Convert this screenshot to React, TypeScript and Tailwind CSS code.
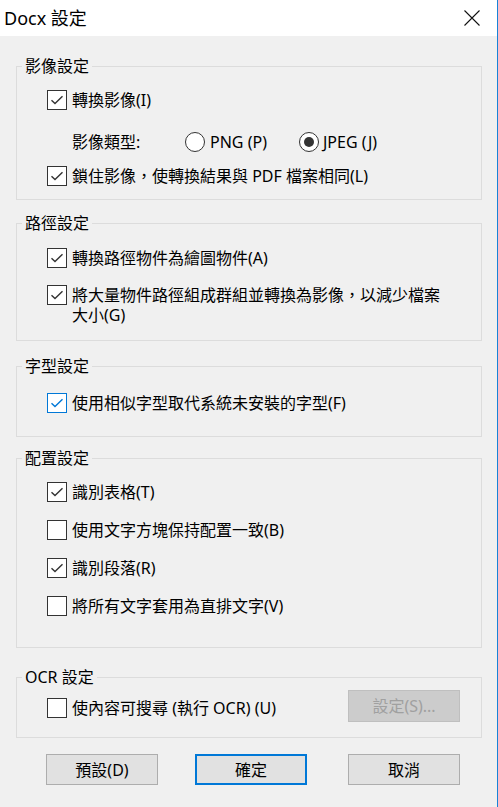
import type { ReactNode } from "react";

const font = "font-['Segoe_UI','Noto_Sans','Noto_Sans_CJK_TC',sans-serif]";

function CheckBox({ checked, focused }: { checked?: boolean; focused?: boolean }) {
  const color = focused ? "#0078d7" : "#333333";
  return (
    <span
      className={`flex h-[20px] w-[20px] shrink-0 items-center justify-center border bg-white ${
        focused ? "border-[#0078d7]" : "border-[#333333]"
      }`}
    >
      {checked && (
        <svg width="14" height="14" viewBox="0 0 14 14" fill="none">
          <path d="M1.5 7.2 L5 10.6 L12.5 3.2" stroke={color} strokeWidth="1.4" />
        </svg>
      )}
    </span>
  );
}

function Radio({ selected }: { selected?: boolean }) {
  return (
    <span className="flex h-[20px] w-[20px] shrink-0 items-center justify-center rounded-full border border-[#333333] bg-white">
      {selected && <span className="h-[10px] w-[10px] rounded-full bg-[#333333]" />}
    </span>
  );
}

function CheckRow({
  checked,
  focused,
  children,
  className = "",
}: {
  checked?: boolean;
  focused?: boolean;
  children: ReactNode;
  className?: string;
}) {
  return (
    <label className={`flex items-start gap-[5px] ${className}`}>
      <CheckBox checked={checked} focused={focused} />
      <span className="text-[16px] leading-[20px] text-black">{children}</span>
    </label>
  );
}

function Group({
  title,
  className = "",
  children,
}: {
  title: string;
  className?: string;
  children: ReactNode;
}) {
  return (
    <div className={`relative mx-[16px] w-[466px] border border-[#dcdcdc] ${className}`}>
      {/* label sits over the top border */}
      <span className="absolute left-[5px] top-[-11px] bg-[#f0f0f0] px-[3px] text-[16px] leading-[20px] text-black">
        {title}
      </span>
      {children}
    </div>
  );
}

function Button({
  children,
  primary,
  disabled,
  className = "",
}: {
  children: ReactNode;
  primary?: boolean;
  disabled?: boolean;
  className?: string;
}) {
  let look = "border border-[#adadad] bg-[#e1e1e1] text-black";
  if (primary) look = "border-2 border-[#0078d7] bg-[#e1e1e1] text-black";
  if (disabled) look = "border border-[#bfbfbf] bg-[#cccccc] text-[#a0a0a0]";
  return (
    <button
      disabled={disabled}
      className={`flex w-[112px] items-center justify-center text-[16px] leading-[20px] ${look} ${className}`}
    >
      {children}
    </button>
  );
}

export default function App() {
  return (
    <div className={`h-[807px] w-[498px] border-r border-[#1883d7] bg-[#f0f0f0] ${font}`}>
      {/* title bar */}
      <div className="flex h-[36px] items-center justify-between bg-white pl-[4px] pr-[17px]">
        <span className="text-[18px] leading-[22px] text-black">Docx 設定</span>
        <svg width="16" height="16" viewBox="0 0 16 16" fill="none">
          <path d="M0.5 0.5 L15.5 15.5 M15.5 0.5 L0.5 15.5" stroke="#111" strokeWidth="1.1" />
        </svg>
      </div>

      <Group title="影像設定" className="mt-[30px] h-[134px] pt-[23px]">
        <CheckRow checked className="pl-[30px]">
          轉換影像(I)
        </CheckRow>
        <div className="mt-[22px] flex h-[20px] items-center pl-[55px] text-[16px] leading-[20px]">
          <span className="w-[113px]">影像類型:</span>
          <span className="flex w-[114px] items-center gap-[5px]">
            <Radio />
            PNG (P)
          </span>
          <span className="flex items-center gap-[4px]">
            <Radio selected />
            JPEG (J)
          </span>
        </div>
        <CheckRow checked className="mt-[14px] pl-[30px]">
          鎖住影像，使轉換結果與 PDF 檔案相同(L)
        </CheckRow>
      </Group>

      <Group title="路徑設定" className="mt-[23px] h-[118px] pt-[24px]">
        <CheckRow checked className="pl-[30px]">
          轉換路徑物件為繪圖物件(A)
        </CheckRow>
        <CheckRow checked className="mt-[17px] pl-[30px]">
          <span className="block w-[372px]">將大量物件路徑組成群組並轉換為影像，以減少檔案大小(G)</span>
        </CheckRow>
      </Group>

      <Group title="字型設定" className="mt-[25px] h-[71px] pt-[26px]">
        <CheckRow checked focused className="pl-[30px]">
          使用相似字型取代系統未安裝的字型(F)
        </CheckRow>
      </Group>

      <Group title="配置設定" className="mt-[21px] h-[190px] pt-[23px]">
        <div className="flex flex-col gap-[18px] pl-[30px]">
          <CheckRow checked>識別表格(T)</CheckRow>
          <CheckRow>使用文字方塊保持配置一致(B)</CheckRow>
          <CheckRow checked>識別段落(R)</CheckRow>
          <CheckRow>將所有文字套用為直排文字(V)</CheckRow>
        </div>
      </Group>

      <Group title="OCR 設定" className="mt-[29px] h-[61px] pt-[12px]">
        <div className="flex items-start justify-between pl-[30px] pr-[21px]">
          <CheckRow className="mt-[8px]">使內容可搜尋 (執行 OCR) (U)</CheckRow>
          <Button disabled className="h-[32px]">
            設定(S)...
          </Button>
        </div>
      </Group>

      <div className="mt-[16px] flex pl-[46px]">
        <Button className="h-[31px]">預設(D)</Button>
        <Button primary className="ml-[37px] h-[31px]">
          確定
        </Button>
        <Button className="ml-[41px] h-[31px]">取消</Button>
      </div>
    </div>
  );
}
